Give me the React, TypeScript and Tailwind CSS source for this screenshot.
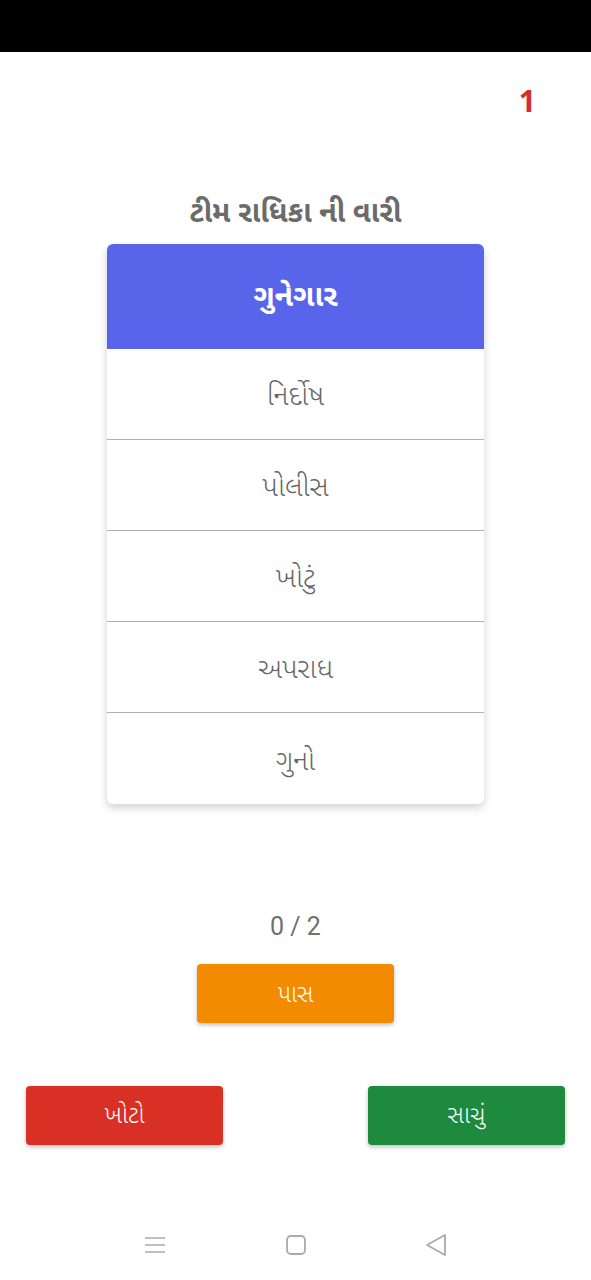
import React from 'react'

const words = ['નિર્દોષ', 'પોલીસ', 'ખોટું', 'અપરાધ', 'ગુનો']

const font = { fontFamily: '"Noto Sans Gujarati", "Noto Sans", Roboto, sans-serif' }

export default function App() {
  return (
    <div className="w-[591px] h-[1280px] bg-white flex flex-col" style={font}>
      {/* status bar */}
      <div className="h-[52px] bg-black shrink-0" />

      <div className="flex justify-end pr-[55px] pt-[33px] h-[130px]">
        <span className="text-[30px] font-bold text-[#d32f2f] leading-[40px]">1</span>
      </div>

      <div className="flex flex-col items-center">
        <h1 className="text-[29px] font-bold text-[#6b6b6b] leading-[40px] mt-[13px]">ટીમ રાધિકા ની વારી</h1>

        <div className="mt-[9px] w-[377px] rounded-[6px] bg-white shadow-[0_4px_8px_rgba(0,0,0,0.18)] overflow-hidden">
          <div className="h-[105px] bg-[#5865ea] flex items-center justify-center pt-[3px]">
            <span className="text-[30px] font-bold text-white">ગુનેગાર</span>
          </div>
          {words.map((w, i) => (
            <div
              key={i}
              className={`h-[91px] flex items-center justify-center pt-[8px] ${i < words.length - 1 ? 'border-b border-[#b0b0b0]' : ''}`}
            >
              <span className="text-[28px] font-light text-[#666]">{w}</span>
            </div>
          ))}
        </div>

        <div className="mt-[103px] text-[25px] text-[#707070] leading-[40px]" style={{ fontFamily: 'Roboto, sans-serif' }}>0 / 2</div>

        <button className="mt-[17px] w-[197px] h-[59px] rounded-[4px] bg-[#f38b00] text-white text-[24px] font-light pt-[4px] shadow-[0_2px_4px_rgba(0,0,0,0.25)]">
          પાસ
        </button>
      </div>

      <div className="flex justify-between px-[26px] mt-[63px]">
        <button className="w-[197px] h-[59px] rounded-[4px] bg-[#d93025] text-white text-[24px] font-light pt-[3px] shadow-[0_2px_4px_rgba(0,0,0,0.25)]">
          ખોટો
        </button>
        <button className="w-[197px] h-[59px] rounded-[4px] bg-[#1e8a3e] text-white text-[24px] font-light pt-[3px] shadow-[0_2px_4px_rgba(0,0,0,0.25)]">
          સાચું
        </button>
      </div>

      {/* nav bar */}
      <div className="mt-auto h-[72px] flex items-center justify-between px-[144px] pt-[2px]">
        <svg width="22" height="20" viewBox="0 0 22 20" fill="none" stroke="#aaa" strokeWidth="1.6">
          <path d="M1 3h20M1 10h20M1 17h20" />
        </svg>
        <svg width="22" height="22" viewBox="0 0 22 22" fill="none" stroke="#aaa" strokeWidth="1.8">
          <rect x="2" y="2" width="18" height="18" rx="4" />
        </svg>
        <svg width="22" height="24" viewBox="0 0 22 24" fill="none" stroke="#aaa" strokeWidth="1.8" strokeLinejoin="round">
          <path d="M20 2 L2 12 L20 22 Z" />
        </svg>
      </div>
    </div>
  )
}
